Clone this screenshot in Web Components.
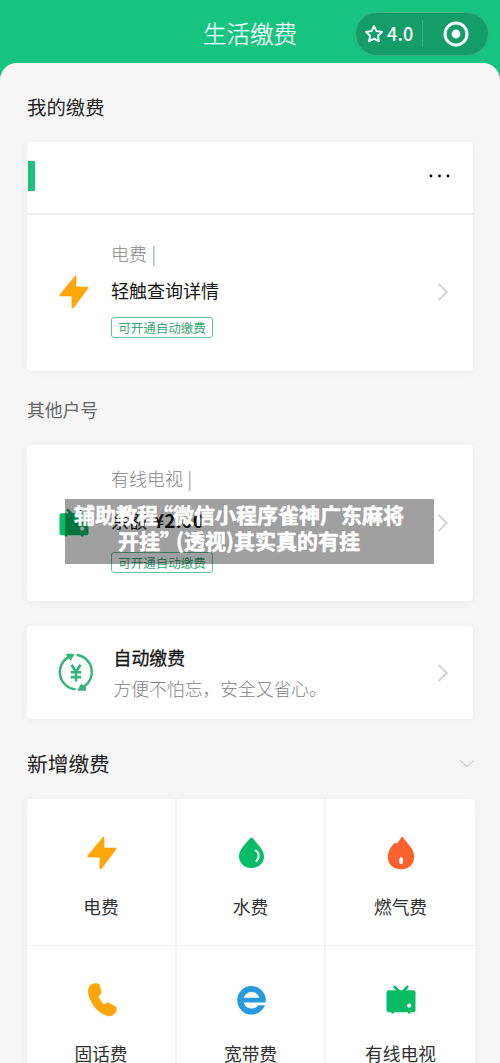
<!DOCTYPE html>
<html lang="zh-CN">
<head>
<meta charset="utf-8">
<title>生活缴费</title>
<style>
html,body{margin:0;height:1063px;overflow:hidden;background:#16c47f}
body{font-family:"Noto Sans CJK SC",sans-serif;color:#222}
</style>
</head>
<body>
<pay-app></pay-app>
<script>
const define=(name,html,init)=>customElements.define(name,class extends HTMLElement{
  constructor(){super();const t=document.createElement('template');t.innerHTML=html;
    this.attachShadow({mode:'open'}).append(t.content.cloneNode(true));}
  connectedCallback(){if(init)init(this,this.shadowRoot);}
});
const icons={
bolt:['0 0 36 36','<path d="M19.2 1.9L3.8 20.8Q3.3 22 4.5 22H15.9V33Q16.300 35 17.600 33.600L31.900 14.400Q32.500 13 31.200 13H20V2.300Q19.900 1.300 19.200 1.900Z" fill="#ffa60a" stroke="#ffa60a" stroke-width=".6" stroke-linejoin="round"/>'],
drop:['0 0 36 36','<path d="M18.500 2.800Q19.500 2.800 20.500 4.100C25 9.600 31 14.900 31 21.300C31 28.500 25.500 33 18.500 33S6 28.500 6 21.300C6 14.900 12 9.600 16.500 4.100Q17.500 2.800 18.500 2.800Z" fill="#06bd66"/><path d="M22.800 15.500C26.500 18 26.500 23 23.500 26" fill="none" stroke="#fff" stroke-width="2.100" stroke-linecap="round"/>'],
fire:['0 0 36 36','<path d="M18.700 2.100Q19.600 1.300 20.400 2.600C23 7.800 31.200 13.500 31.200 21.600C31.200 30 25.500 34.300 18 34.300S4.800 30 4.800 21.600C4.800 16.500 8 11.300 11.300 8.300Q12.600 7 13.800 8.900Z" fill="#fb602f"/><ellipse cx="18.200" cy="25.700" rx="1.900" ry="3.600" fill="#fff"/>'],
phone:['0 0 36 36','<path d="M7 2.500C10 1 14 .9 15.600 2.500L17.600 10.500Q17.600 12.200 14.600 14.200C15.500 17.500 17.500 20 20.200 22.600C22 20.800 23.500 20.200 25.500 20.900L32 24.700Q33.500 27 31.700 30.500Q28.500 35 23.500 34C13.500 31 6.500 22 4.300 12Q3.200 6 7 2.500Z" fill="#ffa60a"/>'],
web:['0 0 36 36','<circle cx="18.500" cy="18.300" r="11.300" fill="none" stroke="#279bdc" stroke-width="6"/><path d="M19 18H34V23.300H19Z" fill="#fff"/><path d="M8 15.700H32.400L32.800 20.500H8Z" fill="#279bdc"/>'],
tv:['0 0 36 36','<path d="M11.800 5L16 9.500M24.300 5L20 9.500" stroke="#06bd66" stroke-width="2.600" stroke-linecap="round"/><rect x="3.500" y="8.300" width="29" height="22" rx="2" fill="#06bd66"/><path d="M8.500 29H11.300V31.500H8.500ZM24.800 29H27.600V31.500H24.800Z" fill="#06bd66"/><circle cx="26.200" cy="23.600" r="2.100" fill="#fff"/>'],
auto:['0 0 36 36','<path d="M11.500 3.500A16.500 16.500 0 0 0 16.700 34.400M19.500 1.900A16.500 16.500 0 0 1 25 32.300" fill="none" stroke="#34b67b" stroke-width="2.300" stroke-linecap="round"/><path d="M9 1.300H15.700L13.200 6.500ZM27 35.200H20L22.700 30L26.800 32Z" fill="#34b67b" stroke="#34b67b" stroke-linejoin="round"/><path d="M13.700 11.200L18 18L22.300 11.200M18 18V27M13 18.200H23M13 22.800H23" fill="none" stroke="#34b67b" stroke-width="2.500"/>'],
arrow:['0 0 12 20','<path d="M2 2.300L9.800 10L2 17.700" fill="none" stroke="#d0d0d0" stroke-width="1.800" stroke-linecap="round"/>'],
down:['0 0 16 10','<path d="M1.500 1.800L8 7.500L14.500 1.800" fill="none" stroke="#d2d2d2" stroke-width="1.300" stroke-linecap="round"/>'],
star:['0 0 20 20','<path d="M10 2.200L12.500 7.100L18 7.900L14 11.800L14.900 17.300L10 14.700L5.100 17.300L6 11.800L2 7.900L7.500 7.100Z" fill="none" stroke="#fff" stroke-width="1.900" stroke-linejoin="round"/>'],
target:['0 0 26 26','<circle cx="13" cy="13" r="11" fill="none" stroke="#fff" stroke-width="3"/><circle cx="13" cy="13" r="4.400" fill="#fff"/>'],
dots:['0 0 22 4','<circle cx="2" cy="2" r="1.400"/><circle cx="10.500" cy="2" r="1.400"/><circle cx="19" cy="2" r="1.400"/>']
};
define('pay-icon','<style>:host{display:block;flex:none}svg{display:block;width:100%;height:100%}</style><svg></svg>',(h,r)=>{
  const [v,b]=icons[h.getAttribute('name')],s=r.querySelector('svg');s.setAttribute('viewBox',v);s.innerHTML=b;});
define('pay-header',`<style>
:host{display:grid;grid-template-columns:1fr 94px 1fr;height:63px;align-items:center;box-sizing:border-box;padding-top:4px;color:#fff}
.t{grid-column:2;font-size:23.5px;line-height:34px;white-space:nowrap;font-weight:300;-webkit-text-stroke:.25px #fff;margin-top:-2px}
.cap{justify-self:end;margin-right:11px;width:134px;height:44px;box-sizing:border-box;border:1px solid #3caf80;border-radius:22px;background:#159d67;display:flex;align-items:center;font:500 18px/24px "Noto Sans CJK SC",sans-serif}
.star{width:20px;height:20px;margin-left:8px}.n{margin-left:3px;width:35px;margin-top:-1px;letter-spacing:.2px}.tg{width:26px;height:26px;margin-left:20px}.bar{width:1px;height:27px;background:#30b27e}
</style><div class="t">生活缴费</div><div class="cap"><pay-icon class="star" name="star"></pay-icon><span class="n">4.0</span><i class="bar"></i><pay-icon class="tg" name="target"></pay-icon></div>`);
define('pay-card','<style>:host{display:block;background:#fff;border-radius:4px;box-shadow:0 1px 9px rgba(0,0,0,.045);box-sizing:border-box}</style><slot></slot>');
define('pay-bill',`<style>
:host{display:flex;box-sizing:border-box;height:156px;padding-left:29px;--top:24px;--gap:9px;--taggap:13px;--mid:59px}
:host([tall]){--top:19px;--gap:14px;--taggap:18px;--mid:60px}
.ic{width:36px;height:36px;margin-top:var(--mid)}
.m{flex:1;margin-left:19px;padding-top:var(--top)}
.k{font-size:18px;line-height:28px;color:#858585;font-weight:300;word-spacing:.5px}.v{font-size:18px;line-height:28px;height:28px;margin-top:var(--gap);color:#151515;white-space:pre}
.tag{display:block;box-sizing:border-box;width:102px;height:21px;margin-top:var(--taggap);border:1px solid #65c397;border-radius:3px;font-size:12.500px;line-height:19px;color:#36a873;text-align:center;white-space:nowrap}
.a{width:12px;height:20px;margin:calc(var(--mid) + 8px) 24px 0 0}
</style><div class="ic"><slot name="icon"></slot></div><div class="m"><div class="k"><slot name="kind"></slot></div><div class="v"><slot></slot></div><span class="tag">可开通自动缴费</span></div><pay-icon class="a" name="arrow"></pay-icon>`);
define('pay-tile',`<style>
:host{display:flex;flex-direction:column;align-items:center;background:#fff;padding-top:36px}
.l{font-size:17.700px;line-height:28px;margin-top:21px;color:#303030;white-space:nowrap}
</style><slot name="icon"></slot><div class="l"><slot></slot></div>`);
define('pay-note',`<style>
:host{position:absolute;left:65px;top:499px;width:369px;height:65px;box-sizing:border-box;background:rgba(0,0,0,.373);color:#fff;font-weight:700;font-size:21px;line-height:26px;white-space:nowrap;padding-top:2px;-webkit-text-stroke:.5px #fff}
div{width:max-content}.a{margin-left:9px}.b{margin-left:53px}
</style><div class="a"><slot name="one"></slot></div><div class="b"><slot name="two"></slot></div>`);
define('pay-app',`<style>
:host{display:block;position:relative;width:500px;height:1063px;overflow:hidden;background:#16c47f}
main{display:block;height:1000px;box-sizing:border-box;background:#f6f6f6;border-radius:17px 17px 0 0;padding:0 27px}
h2{margin:0;font-weight:400;white-space:nowrap}
.h1{font-size:19.400px;line-height:30px;padding-top:29px;height:50px;color:#252525}
.top{height:73px;border-bottom:2px solid #eee;display:flex;align-items:center;justify-content:space-between;box-sizing:border-box;padding-bottom:3px}
.mark{width:7px;height:30px;margin-left:1px;background:#19c37e}
.dots{width:22px;height:4px;margin:0 22px 0 0}
.c1,.c2,.c3{width:446px}.c1{height:229px}
.h2{font-size:17.800px;line-height:28px;margin:24px 0 22px;color:#666}
.c2{height:156px}.c3{height:93px;margin-top:25px;display:flex}
.c3 .i{width:38px;height:38px;margin:27px 0 0 30px}.c3 .m{margin-left:18.500px;flex:1;padding-top:17px}
.m b{display:block;font-weight:400;-webkit-text-stroke:.3px #151515;font-size:17.900px;line-height:28px;color:#151515}.m span{display:block;font-size:17.800px;line-height:28px;margin-top:3px;color:#858585;font-weight:300;white-space:nowrap}
.c3 .a{width:12px;height:20px;margin:37px 24px 0 0}
.h3{display:flex;align-items:center;justify-content:space-between;margin-top:29px;height:30px}.h3 h2{font-size:20.700px;line-height:30px}.h3 pay-icon{width:16px;height:10px;margin:2px -2px 0 0}
.grid{width:448px;margin-top:21px;display:grid;grid-template-columns:148px 147px 149px;grid-auto-rows:146px;gap:1px 2px;background:#f4f4f4;overflow:hidden}
.t{width:36px;height:36px}
.grid .t{position:relative;left:.5px}
.y{font-weight:700;font-size:19px;line-height:20px;margin-left:6px}
.q1{margin-left:-6px}.q2{margin-right:-5px}
</style>
<pay-header></pay-header>
<main>
<h2 class="h1">我的缴费</h2>
<pay-card class="c1"><div class="top"><i class="mark"></i><pay-icon class="dots" name="dots"></pay-icon></div>
<pay-bill><pay-icon class="t" slot="icon" name="bolt"></pay-icon><span slot="kind">电费 |</span>轻触查询详情</pay-bill></pay-card>
<h2 class="h2">其他户号</h2>
<pay-card class="c2"><pay-bill tall><pay-icon class="t" slot="icon" name="tv"></pay-icon><span slot="kind">有线电视 |</span>余额<span class="y">¥2.00</span></pay-bill></pay-card>
<pay-card class="c3"><pay-icon class="i" name="auto"></pay-icon><div class="m"><b>自动缴费</b><span>方便不怕忘，安全又省心。</span></div><pay-icon class="a" name="arrow"></pay-icon></pay-card>
<div class="h3"><h2>新增缴费</h2><pay-icon name="down"></pay-icon></div>
<pay-card class="grid">
<pay-tile><pay-icon class="t" slot="icon" name="bolt"></pay-icon>电费</pay-tile>
<pay-tile><pay-icon class="t" slot="icon" name="drop"></pay-icon>水费</pay-tile>
<pay-tile><pay-icon class="t" slot="icon" name="fire"></pay-icon>燃气费</pay-tile>
<pay-tile><pay-icon class="t" slot="icon" name="phone"></pay-icon>固话费</pay-tile>
<pay-tile><pay-icon class="t" slot="icon" name="web"></pay-icon>宽带费</pay-tile>
<pay-tile><pay-icon class="t" slot="icon" name="tv"></pay-icon>有线电视</pay-tile>
</pay-card>
</main>
<pay-note><span slot="one">辅助教程<span class="q1">“</span>微信小程序雀神广东麻将</span><span slot="two">开挂<span class="q2">”</span>(透视)其实真的有挂</span></pay-note>`);
</script>
</body>
</html>
